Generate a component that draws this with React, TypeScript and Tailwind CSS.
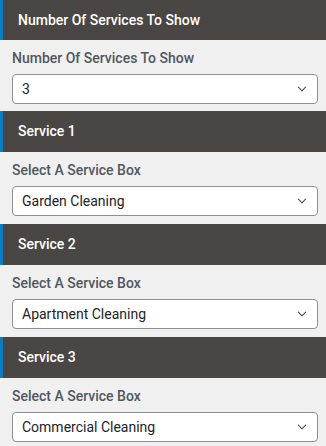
const sections = [
  { title: "Service 1", label: "Select A Service Box", value: "Garden Cleaning" },
  { title: "Service 2", label: "Select A Service Box", value: "Apartment Cleaning" },
  { title: "Service 3", label: "Select A Service Box", value: "Commercial Cleaning" },
];

const Header = ({ title, first }: { title: string; first?: boolean }) => (
  <div
    className={`flex items-center bg-[#4a4644] ${first ? "h-10" : "h-[41px]"}`}
  >
    <div className="h-full w-[3px] bg-[#0b7cc1]" />
    <h3 className="pl-[15px] text-[14px] font-medium text-white">{title}</h3>
  </div>
);

const Chevron = () => (
  <svg width="12" height="12" viewBox="0 0 20 20" className="text-[#50575e]">
    <path
      d="M4 7l6 6 6-6"
      fill="none"
      stroke="currentColor"
      strokeWidth="2"
      strokeLinecap="round"
      strokeLinejoin="round"
    />
  </svg>
);

const Field = ({
  label,
  value,
  first,
}: {
  label: string;
  value: string;
  first?: boolean;
}) => (
  <div className={`bg-[#f0f0f1] pt-2 pl-3 pr-2 ${first ? "pb-[7px]" : "pb-2"}`}>
    <label className="block text-[14px] leading-5 font-medium text-[#50575e]">
      {label}
    </label>
    <div className="mt-1.5 flex h-[30px] items-center justify-between rounded-[4px] border border-[#8c8f94] bg-white pl-[9px] pr-[9px]">
      <span className="text-[14px] text-[#1d2327]">{value}</span>
      <Chevron />
    </div>
  </div>
);

export default function App() {
  return (
    <div
      className="w-[326px] h-[446px] overflow-hidden bg-[#f0f0f1]"
      style={{ fontFamily: "Roboto, 'Liberation Sans', sans-serif" }}
    >
      <Header title="Number Of Services To Show" first />
      <Field label="Number Of Services To Show" value="3" first />
      {sections.map((s) => (
        <div key={s.title}>
          <Header title={s.title} />
          <Field label={s.label} value={s.value} />
        </div>
      ))}
    </div>
  );
}
